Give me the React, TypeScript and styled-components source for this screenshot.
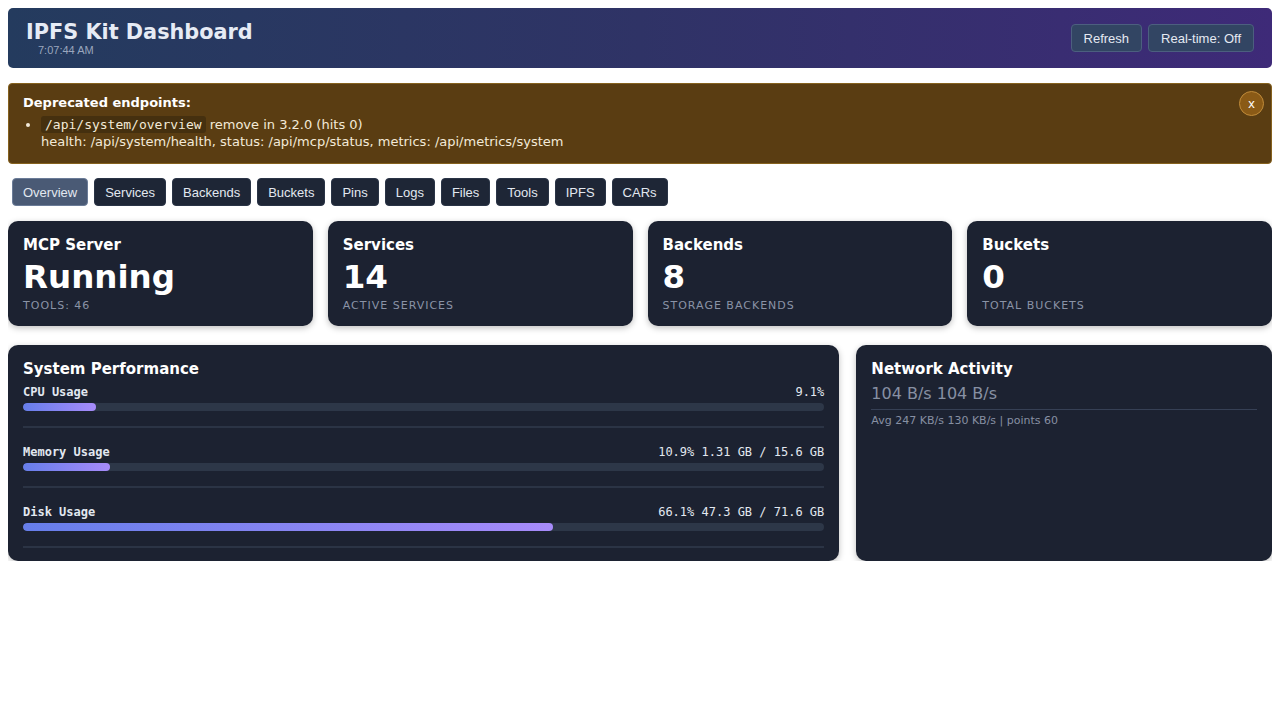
import styled, { createGlobalStyle } from 'styled-components';

const GlobalStyle = createGlobalStyle`
  body {
    margin: 8px;
    background: #ffffff;
    font-family: "DejaVu Sans", "Noto Sans", sans-serif;
  }
  * { box-sizing: border-box; }
`;

const tabs = ['Overview', 'Services', 'Backends', 'Buckets', 'Pins', 'Logs', 'Files', 'Tools', 'IPFS', 'CARs'];

const stats = [
  { title: 'MCP Server', value: 'Running', sub: 'Tools: 46' },
  { title: 'Services', value: '14', sub: 'Active services' },
  { title: 'Backends', value: '8', sub: 'Storage backends' },
  { title: 'Buckets', value: '0', sub: 'Total buckets' },
];

const metrics = [
  { label: 'CPU Usage', value: '9.1%', pct: 9.1 },
  { label: 'Memory Usage', value: '10.9% 1.31 GB / 15.6 GB', pct: 10.9 },
  { label: 'Disk Usage', value: '66.1% 47.3 GB / 71.6 GB', pct: 66.1 },
];

export default function App() {
  return (
    <Page>
      <GlobalStyle />
      <Header>
        <TitleBlock>
          <Title>IPFS Kit Dashboard</Title>
          <Clock>7:07:44 AM</Clock>
        </TitleBlock>
        <HeaderActions>
          <HeaderButton>Refresh</HeaderButton>
          <HeaderButton>Real-time: Off</HeaderButton>
        </HeaderActions>
      </Header>

      <Banner>
        <BannerTitle>Deprecated endpoints:</BannerTitle>
        <BannerList>
          <li>
            <Code>/api/system/overview</Code> remove in 3.2.0 (hits 0)
            <br />
            health: /api/system/health, status: /api/mcp/status, metrics: /api/metrics/system
          </li>
        </BannerList>
        <CloseButton>x</CloseButton>
      </Banner>

      <TabBar>
        {tabs.map((t, i) => (
          <Tab key={t} $active={i === 0}>{t}</Tab>
        ))}
      </TabBar>

      <StatGrid>
        {stats.map((s) => (
          <Card key={s.title}>
            <CardTitle>{s.title}</CardTitle>
            <BigValue>{s.value}</BigValue>
            <SubLabel>{s.sub}</SubLabel>
          </Card>
        ))}
      </StatGrid>

      <PanelGrid>
        <Panel>
          <PanelTitle>System Performance</PanelTitle>
          {metrics.map((m) => (
            <MetricRow key={m.label}>
              <MetricHead>
                <strong>{m.label}</strong>
                <span>{m.value}</span>
              </MetricHead>
              <Track>
                <Fill style={{ width: `${m.pct}%` }} />
              </Track>
            </MetricRow>
          ))}
        </Panel>
        <Panel>
          <CardTitle>Network Activity</CardTitle>
          <Rate>104 B/s 104 B/s</Rate>
          <NetMeta>Avg 247 KB/s 130 KB/s | points 60</NetMeta>
        </Panel>
      </PanelGrid>
    </Page>
  );
}

const Page = styled.div`
  display: flex;
  flex-direction: column;
`;

const Header = styled.header`
  height: 60px;
  border-radius: 5px;
  background: linear-gradient(90deg, #243b5e 0%, #2f3366 50%, #3e2a78 100%);
  display: flex;
  justify-content: space-between;
  align-items: center;
  padding: 0 18px;
`;

const TitleBlock = styled.div`
  display: flex;
  flex-direction: column;
`;

const Title = styled.h1`
  margin: 0;
  font-size: 20.8px;
  font-weight: 700;
  color: #e6ebf5;
  line-height: 24px;
`;

const Clock = styled.div`
  font-family: "Liberation Sans", Arial, sans-serif;
  font-size: 11px;
  color: #9aa6bd;
  padding-left: 12px;
  line-height: 13px;
`;

const HeaderActions = styled.div`
  display: flex;
  gap: 6px;
`;

const HeaderButton = styled.button`
  font-family: "Liberation Sans", Arial, sans-serif;
  font-size: 13px;
  color: #e5e9f2;
  background: #324563;
  border: 1px solid #4c5f7f;
  border-radius: 4px;
  height: 28px;
  padding: 0 12px;
  cursor: pointer;
`;

const Banner = styled.section`
  position: relative;
  margin-top: 15px;
  background: #5a3d12;
  border: 1px solid #86621f;
  border-radius: 4px;
  padding: 10px 14px 13px;
  color: #f3ead8;
  font-size: 13px;
  line-height: 17px;
`;

const BannerTitle = styled.div`
  font-weight: 700;
  color: #ffffff;
  margin-bottom: 5px;
`;

const BannerList = styled.ul`
  margin: 0;
  padding-left: 18px;
`;

const Code = styled.code`
  font-family: "DejaVu Sans Mono", monospace;
  font-size: 13px;
  background: #45300f;
  border-radius: 3px;
  padding: 1px 4px;
`;

const CloseButton = styled.button`
  position: absolute;
  top: 7px;
  right: 7px;
  width: 25px;
  height: 25px;
  border-radius: 50%;
  background: #8a5a16;
  border: 1px solid #c08b3a;
  color: #ffffff;
  font-family: "Liberation Sans", Arial, sans-serif;
  font-size: 13px;
  padding: 0;
  cursor: pointer;
`;

const TabBar = styled.nav`
  display: flex;
  gap: 6px;
  margin-top: 14px;
  padding-left: 4px;
`;

const Tab = styled.button<{ $active?: boolean }>`
  font-family: "Liberation Sans", Arial, sans-serif;
  font-size: 13px;
  height: 28px;
  padding: 0 10px;
  border-radius: 4px;
  color: #e2e8f0;
  background: ${(p) => (p.$active ? '#4a5a75' : '#1e2636')};
  border: 1px solid ${(p) => (p.$active ? '#6b7c98' : '#2a3446')};
  cursor: pointer;
`;

const StatGrid = styled.div`
  display: grid;
  grid-template-columns: repeat(4, 1fr);
  gap: 15px;
  margin-top: 15px;
`;

const Card = styled.div`
  background: #1c2231;
  border-radius: 10px;
  padding: 13px 15px 12px;
  color: #ffffff;
  box-shadow: 0 2px 6px rgba(0, 0, 0, 0.25);
  height: 105px;
`;

const CardTitle = styled.h3`
  margin: 0;
  font-size: 15px;
  font-weight: 700;
  line-height: 22px;
  color: #ffffff;
`;

const PanelTitle = styled(CardTitle)`
  margin-bottom: 5px;
`;

const BigValue = styled.div`
  font-size: 32.5px;
  font-weight: 700;
  line-height: 43px;
`;

const SubLabel = styled.div`
  font-size: 11px;
  text-transform: uppercase;
  letter-spacing: 1px;
  color: #8a93a6;
  line-height: 14px;
`;

const PanelGrid = styled.div`
  display: grid;
  grid-template-columns: 2fr 1fr;
  gap: 17px;
  margin-top: 19px;
`;

const Panel = styled.div`
  background: #1c2231;
  border-radius: 10px;
  padding: 13px 15px 12px;
  box-shadow: 0 2px 6px rgba(0, 0, 0, 0.25);
  height: 216px;
`;

const MetricRow = styled.div`
  padding: 0 0 15px;
  margin-bottom: 17px;
  border-bottom: 2px solid #2b3445;
  &:last-child {
    margin-bottom: 0;
  }
`;

const MetricHead = styled.div`
  display: flex;
  justify-content: space-between;
  font-family: "DejaVu Sans Mono", monospace;
  font-size: 12px;
  line-height: 14px;
  color: #e2e8f0;
  margin-bottom: 4px;
`;

const Track = styled.div`
  height: 8px;
  border-radius: 4px;
  background: #2d3748;
  overflow: hidden;
`;

const Fill = styled.div`
  height: 100%;
  border-radius: 4px;
  background: linear-gradient(90deg, #667eea, #a78bfa);
`;

const Rate = styled.div`
  font-size: 16px;
  color: #8790a3;
  line-height: 22px;
  margin-top: 3px;
  padding-bottom: 4px;
  border-bottom: 1px solid #364055;
`;

const NetMeta = styled.div`
  font-size: 11px;
  line-height: 14px;
  color: #8790a3;
  margin-top: 4px;
`;
